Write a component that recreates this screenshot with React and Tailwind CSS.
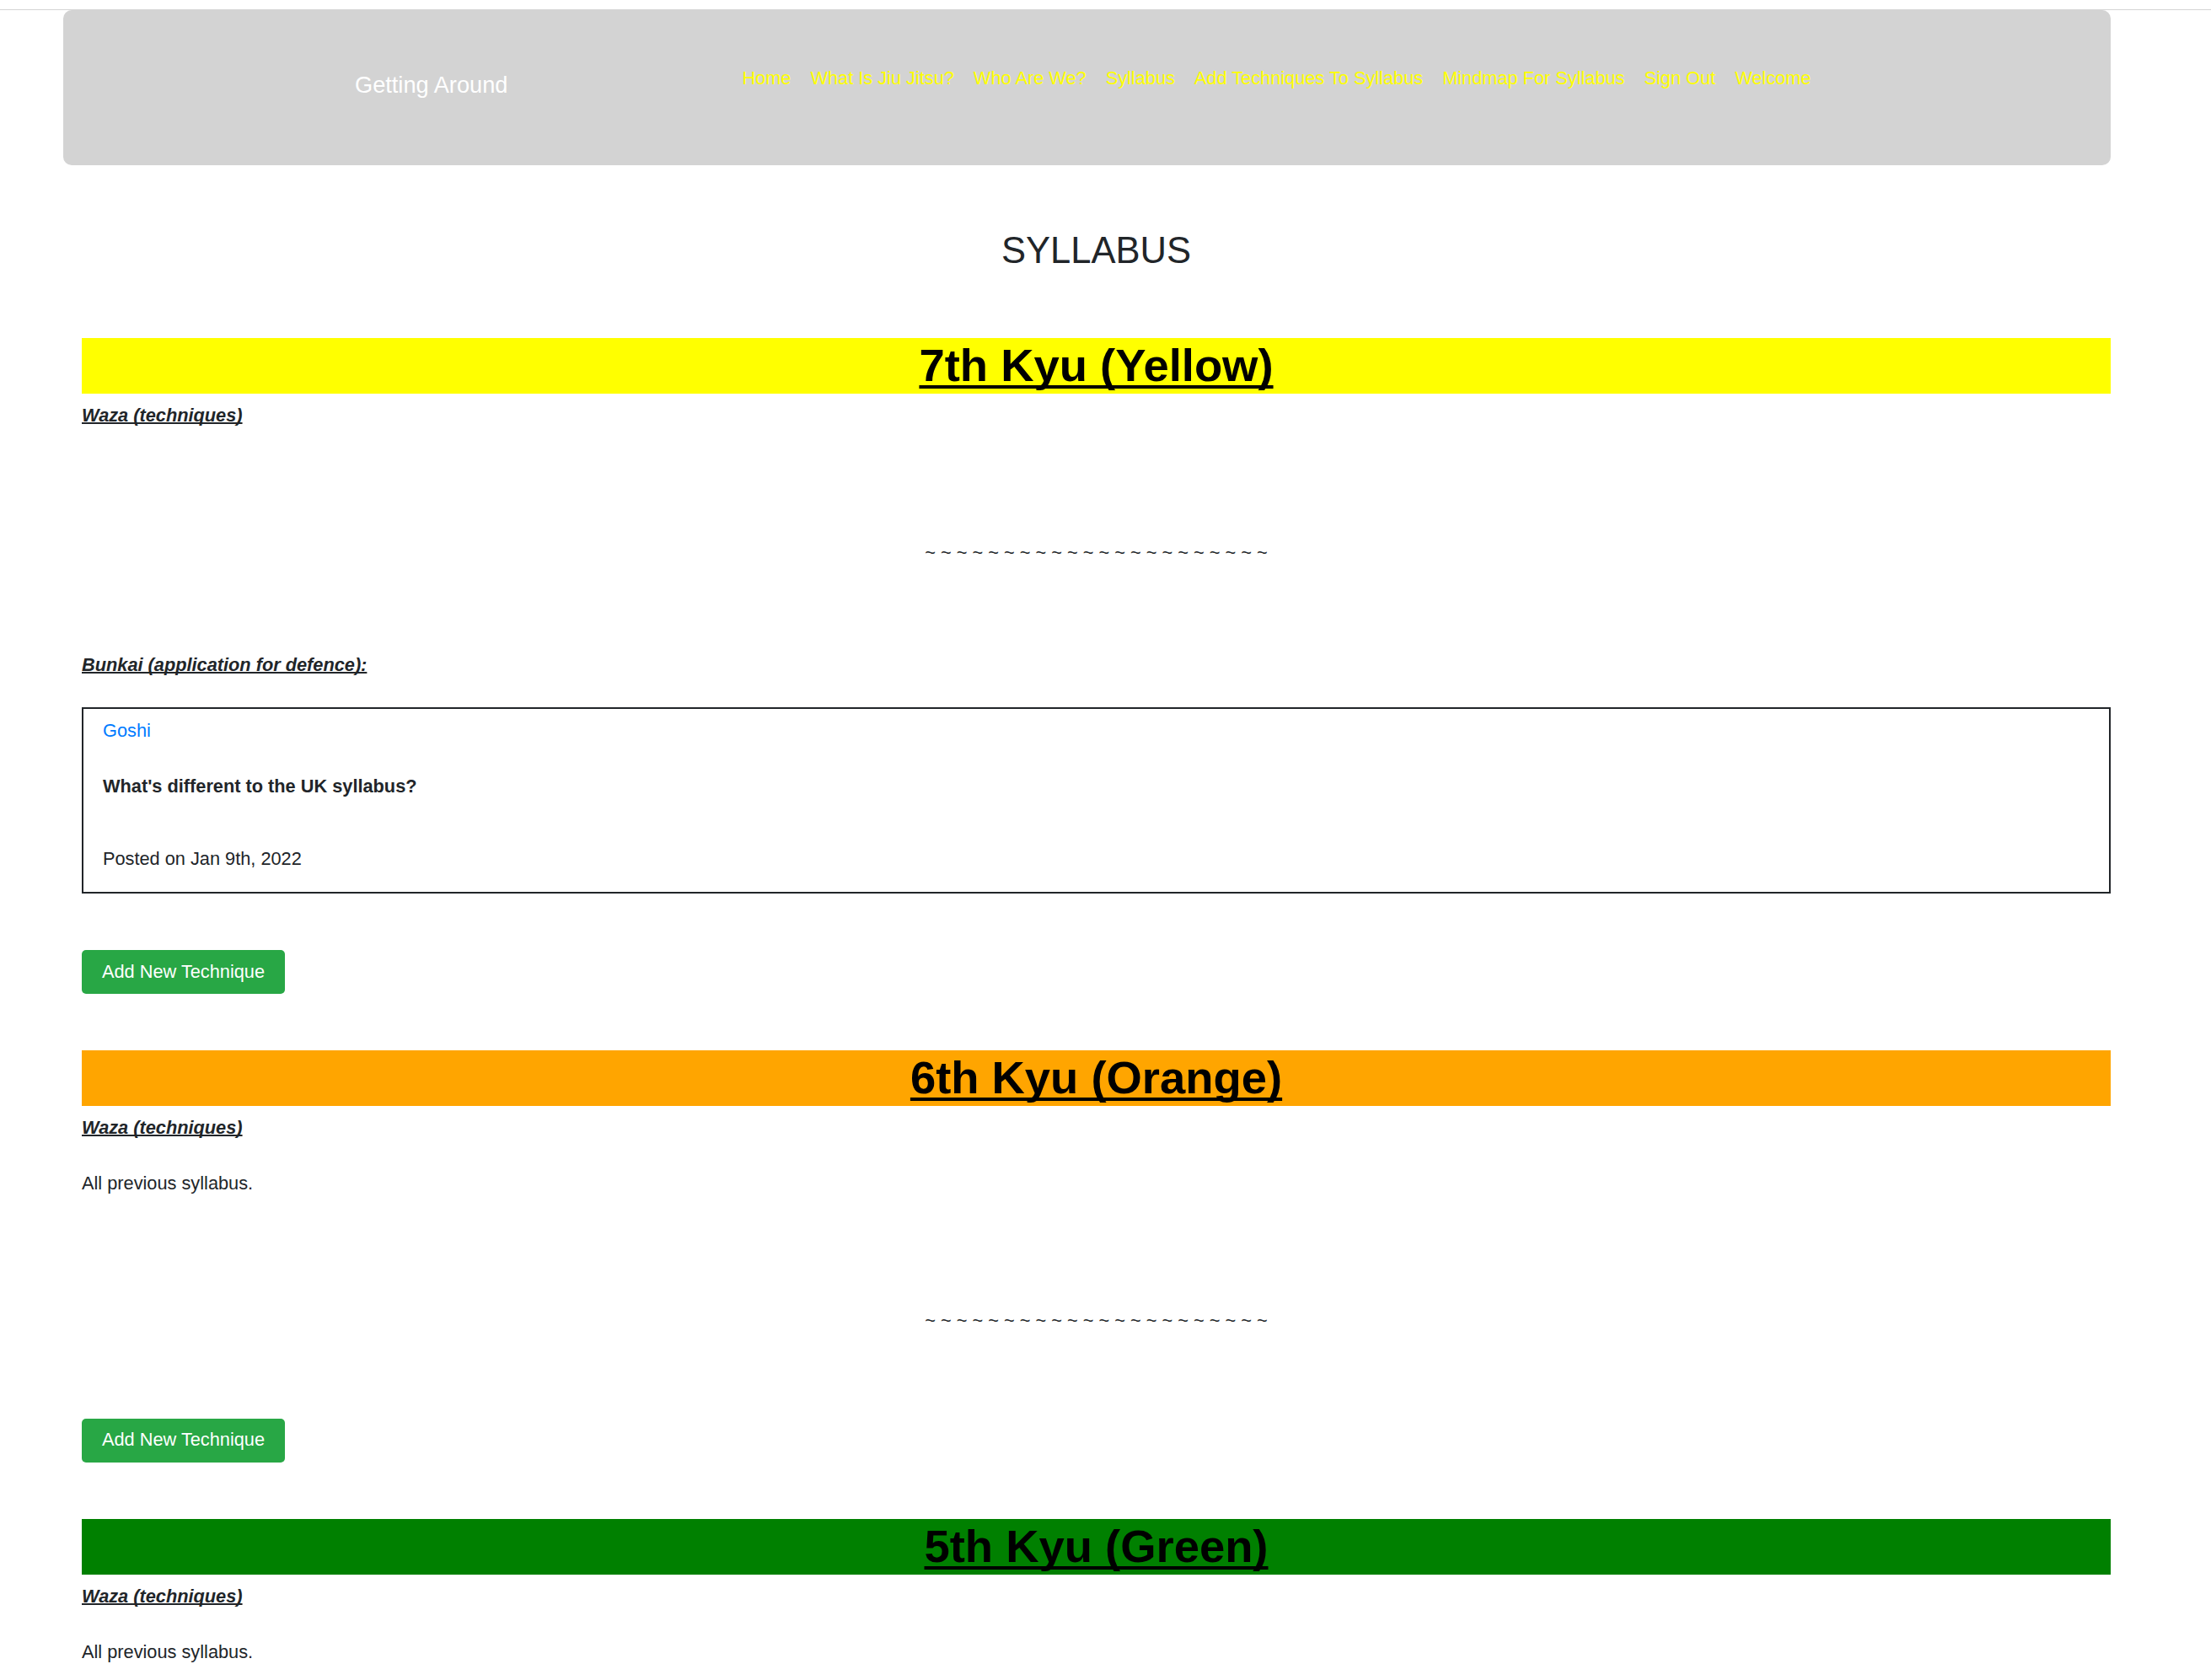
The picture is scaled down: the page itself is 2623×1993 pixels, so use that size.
import React from "react";

const links = [
  "Home",
  "What Is Jiu Jitsu?",
  "Who Are We?",
  "Syllabus",
  "Add Techniques To Syllabus",
  "Mindmap For Syllabus",
  "Sign Out",
  "Welcome",
];

const tildes = Array(22).fill("~").join(" ");

const Header = () => (
  <div className="ml-[75px] w-[2429px] h-[184px] rounded-[10px] bg-[#d3d3d3] flex items-start pl-[346px]">
    <span className="shrink-0 mt-[69px] text-[27.2px] leading-[40px] text-white">Getting Around</span>
    <nav className="ml-[278px] mt-[65px] flex gap-[23px] text-[21.76px] leading-[32px] text-[#ffff00]">
      {links.map((l) => (
        <a key={l} href="#" className="whitespace-nowrap">
          {l}
        </a>
      ))}
    </nav>
  </div>
);

const BeltHeading = ({ label, bg }) => (
  <h1 className={`text-[54.4px] leading-[66px] font-bold text-black text-center ${bg}`}>
    <span className="underline decoration-4 underline-offset-[5px] [text-decoration-skip-ink:none]">{label}</span>
  </h1>
);

const Waza = () => (
  <p className="mt-[10px] font-bold italic underline decoration-2 [text-decoration-skip-ink:none]">
    Waza (techniques)
  </p>
);

const Tildes = () => <p className="mt-[130px] text-center">{tildes}</p>;

const AddButton = ({ mt }) => (
  <button className={`${mt} h-[52px] px-[24px] rounded-[5px] bg-[#28a745] text-white flex items-center`}>
    Add New Technique
  </button>
);

const App = () => {
  return (
    <div className="min-h-screen bg-white font-['Liberation_Sans',Arial,sans-serif] text-[#212529] text-[21.76px] leading-[32.64px] pb-[40px]">
      <div className="mt-[11px] h-px bg-[#d4d4d4]" />
      <Header />

      <main className="ml-[97px] w-[2407px]">
        <h2 className="mt-[75px] text-center text-[43.52px] leading-[52px] font-medium">SYLLABUS</h2>

        {/* 7th Kyu */}
        <div className="mt-[78px]">
          <BeltHeading label="7th Kyu (Yellow)" bg="bg-[#ffff00]" />
          <Waza />
          <Tildes />
          <p className="mt-[101px] font-bold italic underline decoration-2 [text-decoration-skip-ink:none]">
            Bunkai (application for defence):
          </p>
          <div className="mt-[33px] border-2 border-[#212529] px-[23px] pt-[10px] pb-[22px]">
            <a href="#" className="text-[#007bff]">Goshi</a>
            <p className="mt-[33px] font-bold">What's different to the UK syllabus?</p>
            <p className="mt-[54px]">Posted on Jan 9th, 2022</p>
          </div>
          <AddButton mt="mt-[67px]" />
        </div>

        {/* 6th Kyu */}
        <div className="mt-[67px]">
          <BeltHeading label="6th Kyu (Orange)" bg="bg-[#ffa500]" />
          <Waza />
          <p className="mt-[34px]">All previous syllabus.</p>
          <Tildes />
          <AddButton mt="mt-[99px]" />
        </div>

        {/* 5th Kyu */}
        <div className="mt-[67px]">
          <BeltHeading label="5th Kyu (Green)" bg="bg-[#008000]" />
          <Waza />
          <p className="mt-[34px]">All previous syllabus.</p>
          <Tildes />
          <AddButton mt="mt-[99px]" />
        </div>
      </main>
    </div>
  );
};

export default App;
